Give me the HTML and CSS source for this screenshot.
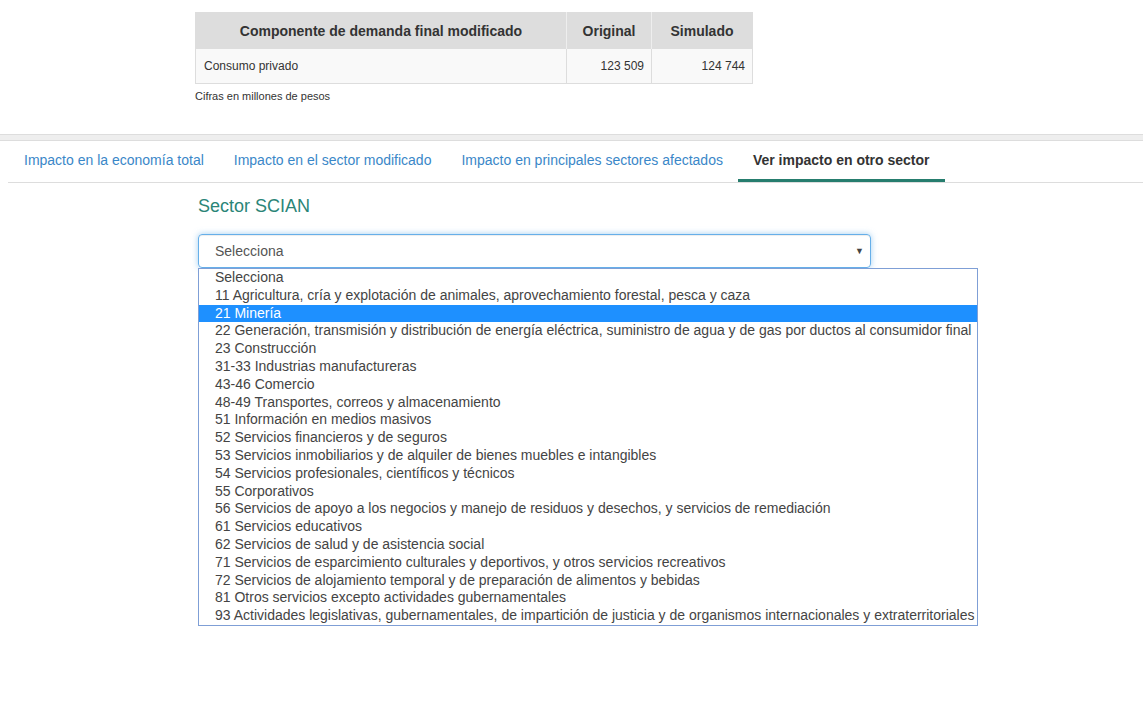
FILE: index.html
```html
<!DOCTYPE html>
<html lang="es">
<head>
  <meta charset="UTF-8">
  <title>Simulador - Ver impacto en otro sector</title>
  <meta name="viewport" content="width=device-width, initial-scale=1.0">
  <link rel="stylesheet" href="styles.css">
</head>
<body>

  <div class="summary">
    <table class="demand-table">
      <thead>
        <tr>
          <th class="col-name">Componente de demanda final modificado</th>
          <th class="col-orig">Original</th>
          <th class="col-sim">Simulado</th>
        </tr>
      </thead>
      <tbody>
        <tr>
          <td>Consumo privado</td>
          <td class="num">123 509</td>
          <td class="num">124 744</td>
        </tr>
      </tbody>
    </table>
    <div class="note">Cifras en millones de pesos</div>
  </div>

  <div class="separator"></div>

  <ul class="tabs">
    <li><a href="#">Impacto en la economía total</a></li>
    <li><a href="#">Impacto en el sector modificado</a></li>
    <li><a href="#">Impacto en principales sectores afectados</a></li>
    <li class="active"><a href="#">Ver impacto en otro sector</a></li>
  </ul>

  <div class="sector-panel">
    <h3 class="sector-title">Sector SCIAN</h3>
    <div class="select-box">
      <span>Selecciona</span>
      <span class="caret">&#9660;</span>
    </div>
    <div class="sector-list">
      <div class="sector-item">Selecciona</div>
      <div class="sector-item">11 Agricultura, cría y explotación de animales, aprovechamiento forestal, pesca y caza</div>
      <div class="sector-item selected">21 Minería</div>
      <div class="sector-item">22 Generación, transmisión y distribución de energía eléctrica, suministro de agua y de gas por ductos al consumidor final</div>
      <div class="sector-item">23 Construcción</div>
      <div class="sector-item">31-33 Industrias manufactureras</div>
      <div class="sector-item">43-46 Comercio</div>
      <div class="sector-item">48-49 Transportes, correos y almacenamiento</div>
      <div class="sector-item">51 Información en medios masivos</div>
      <div class="sector-item">52 Servicios financieros y de seguros</div>
      <div class="sector-item">53 Servicios inmobiliarios y de alquiler de bienes muebles e intangibles</div>
      <div class="sector-item">54 Servicios profesionales, científicos y técnicos</div>
      <div class="sector-item">55 Corporativos</div>
      <div class="sector-item">56 Servicios de apoyo a los negocios y manejo de residuos y desechos, y servicios de remediación</div>
      <div class="sector-item">61 Servicios educativos</div>
      <div class="sector-item">62 Servicios de salud y de asistencia social</div>
      <div class="sector-item">71 Servicios de esparcimiento culturales y deportivos, y otros servicios recreativos</div>
      <div class="sector-item">72 Servicios de alojamiento temporal y de preparación de alimentos y bebidas</div>
      <div class="sector-item">81 Otros servicios excepto actividades gubernamentales</div>
      <div class="sector-item">93 Actividades legislativas, gubernamentales, de impartición de justicia y de organismos internacionales y extraterritoriales</div>
    </div>
  </div>

</body>
</html>
```

FILE: styles.css
```css
html, body {
  margin: 0;
  padding: 0;
  background: #fff;
  font-family: "Liberation Sans", Arial, sans-serif;
  color: #333;
}

.summary {
  padding: 12px 0 0 195px;
  height: 134px;
  box-sizing: border-box;
}

.demand-table {
  border-collapse: collapse;
  width: 558px;
  border: 1px solid #ddd;
}

.demand-table th {
  background: #ddd;
  font-size: 14px;
  font-weight: bold;
  height: 36px;
  padding: 0 8px;
  text-align: center;
  border-left: 1px solid #eee;
}

.demand-table td {
  background: #f9f9f9;
  font-size: 12px;
  height: 34px;
  padding: 0 7px 0 8px;
  border-left: 1px solid #ddd;
}

.demand-table th:first-child,
.demand-table td:first-child {
  border-left: none;
}

.col-name { width: 354px; }
.col-orig { width: 68px; }

.num {
  text-align: right;
}

.note {
  font-size: 11px;
  margin-top: 6px;
}

.separator {
  height: 5px;
  background: #eee;
  border-top: 1px solid #ddd;
  border-bottom: 1px solid #ddd;
}

.tabs {
  list-style: none;
  margin: 0 0 0 8px;
  padding: 0;
  display: flex;
  border-bottom: 1px solid #ddd;
}

.tabs li a {
  display: block;
  padding: 0 15px;
  height: 38px;
  line-height: 38px;
  font-size: 14px;
  color: #3a87c8;
  text-decoration: none;
  border-bottom: 3px solid transparent;
}

.tabs li:first-child a {
  padding-left: 16px;
}

.tabs li.active a {
  color: #333;
  font-weight: bold;
  border-bottom-color: #267d6e;
}

.sector-panel {
  padding-left: 198px;
}

.sector-title {
  margin: 12px 0 17px;
  font-size: 18px;
  font-weight: normal;
  color: #2b8577;
  line-height: 22px;
}

.select-box {
  width: 673px;
  height: 34px;
  box-sizing: border-box;
  border: 1px solid #66afe9;
  border-radius: 4px;
  box-shadow: inset 0 1px 1px rgba(0,0,0,.075), 0 0 6px rgba(102,175,233,.6);
  display: flex;
  align-items: center;
  justify-content: space-between;
  padding: 0 6px 0 16px;
  font-size: 14px;
  color: #555;
}

.caret {
  font-size: 9px;
  color: #444;
}

.sector-list {
  width: 780px;
  box-sizing: border-box;
  background: #fff;
  border: 1px solid #7f9fd6;
}

.sector-item {
  height: 17.8px;
  line-height: 17.8px;
  padding-left: 16px;
  font-size: 14px;
  color: #444;
  white-space: nowrap;
}

.sector-item.selected {
  background: #1e90ff;
  color: #fff;
}
```
